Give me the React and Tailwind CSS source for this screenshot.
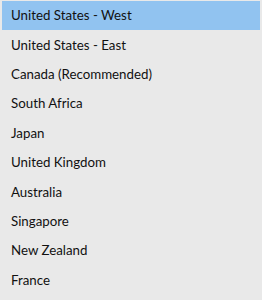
const REGIONS = [
  'United States - West',
  'United States - East',
  'Canada (Recommended)',
  'South Africa',
  'Japan',
  'United Kingdom',
  'Australia',
  'Singapore',
  'New Zealand',
  'France',
];

export default function App() {
  return (
    <div className="h-[300px] w-[262px] overflow-hidden bg-[#e9e9e9] px-[2px] pt-[1px]">
      <ul className="flex flex-col">
        {REGIONS.map((name, index) => (
          <li
            key={name}
            className={`flex h-[29.4px] items-center pt-[1px] pl-[9px] text-[13.3px] text-[#111111] ${
              index === 0 ? 'bg-[#91c3f0]' : ''
            }`}
            style={{ fontFamily: 'Lato, "Noto Sans", sans-serif' }}
          >
            {name}
          </li>
        ))}
      </ul>
    </div>
  );
}
